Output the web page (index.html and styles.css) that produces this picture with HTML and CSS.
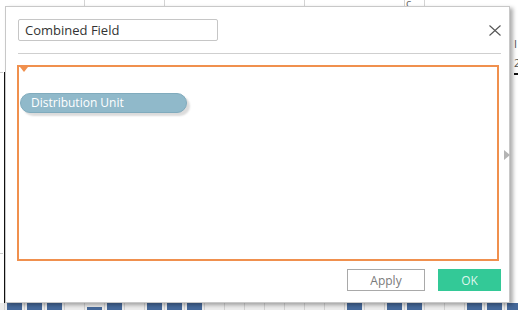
FILE: index.html
```html
<!DOCTYPE html>
<html lang="en">
<head>
    <meta charset="UTF-8">
    <meta name="viewport" content="width=device-width, initial-scale=1.0">
    <title>Combined Field</title>
    <link rel="stylesheet" href="styles.css">
</head>
<body>
    <div class="sheet">
        <div class="heads">
            <div class="head" style="width: 85px"></div>
            <div class="head" style="width: 80px"></div>
            <div class="head" style="width: 140px"></div>
            <div class="head" style="width: 100px"></div>
            <div class="head" style="width: 20px"><span class="head-text">c</span></div>
            <div class="head last"></div>
        </div>

        <div class="rows">
            <div class="gutter-left">
                <span class="tick" style="top: 66px"></span>
                <span class="tick" style="top: 247px"></span>
                <span class="axis"></span>
            </div>
            <div class="grid-body"></div>
            <div class="gutter-right">
                <span class="mark" style="top: 32px">I</span>
                <span class="mark" style="top: 51px">2</span>
                <span class="dash" style="top: 67px"></span>
            </div>
        </div>

        <div class="bars">
            <div class="bar-cell lead"></div>
            <div class="bar-cell"><span class="bar"></span></div>
            <div class="bar-cell"><span class="bar"></span></div>
            <div class="bar-cell"><span class="bar"></span></div>
            <div class="bar-cell"></div>
            <div class="bar-cell"><span class="bar short"></span></div>
            <div class="bar-cell"><span class="bar"></span></div>
            <div class="bar-cell"></div>
            <div class="bar-cell"><span class="bar"></span></div>
            <div class="bar-cell"><span class="bar"></span></div>
            <div class="bar-cell"><span class="bar"></span></div>
            <div class="bar-cell"></div>
            <div class="bar-cell"></div>
            <div class="bar-cell"></div>
            <div class="bar-cell"></div>
            <div class="bar-cell"></div>
            <div class="bar-cell"></div>
            <div class="bar-cell"></div>
            <div class="bar-cell"><span class="bar"></span></div>
            <div class="bar-cell"></div>
            <div class="bar-cell"><span class="bar"></span></div>
            <div class="bar-cell"><span class="bar"></span></div>
            <div class="bar-cell"></div>
            <div class="bar-cell"></div>
            <div class="bar-cell"><span class="bar"></span></div>
            <div class="bar-cell"><span class="bar"></span></div>
            <div class="bar-cell"><span class="bar"></span></div>
        </div>
    </div>

    <div class="dialog">
        <div class="dlg-head">
            <input type="text" class="name-field" value="Combined Field">
            <button class="close" aria-label="Close">
                <svg width="12" height="11" viewBox="0 0 12 11">
                    <path d="M0.5 0.5 L11.5 10.5 M11.5 0.5 L0.5 10.5" stroke="#555" stroke-width="1.1" fill="none"/>
                </svg>
            </button>
        </div>

        <div class="drop-zone">
            <span class="drop-marker"></span>
            <div class="pill">Distribution Unit</div>
        </div>

        <span class="scroll-arrow"></span>

        <div class="dlg-foot">
            <button class="btn apply">Apply</button>
            <button class="btn ok">OK</button>
        </div>
    </div>
</body>
</html>
```

FILE: styles.css
```css
html, body {
    margin: 0;
    padding: 0;
}
body {
    width: 518px;
    height: 310px;
    overflow: hidden;
    background-color: #fff;
    font-family: 'Open Sans', 'Noto Sans', sans-serif;
    color: #333;
    position: relative;
}

/* worksheet behind the dialog */
.sheet {
    display: flex;
    flex-direction: column;
    height: 310px;
}
.heads {
    display: flex;
    height: 6px;
    overflow: hidden;
}
.head {
    box-sizing: border-box;
    border-right: 1px solid #d4d4d4;
    position: relative;
}
.head.last {
    flex: 1;
    border-right: none;
}
.head-text {
    position: absolute;
    left: 1px;
    top: -3px;
    font-size: 11px;
    line-height: 11px;
    color: #666;
}
.rows {
    flex: 1;
    display: flex;
}
.gutter-left {
    width: 5px;
    position: relative;
}
.tick {
    position: absolute;
    left: 0;
    width: 3px;
    height: 1px;
    background-color: #ccc;
}
.axis {
    position: absolute;
    left: 4px;
    top: 66px;
    bottom: 0;
    width: 1px;
    background-color: #111;
}
.grid-body {
    flex: 1;
}
.gutter-right {
    width: 8px;
    position: relative;
}
.mark {
    position: absolute;
    left: 4px;
    font-size: 11px;
    line-height: 11px;
    color: #555;
}
.dash {
    position: absolute;
    left: 4px;
    width: 4px;
    height: 2px;
    background-color: #111;
}
.bars {
    display: flex;
    height: 7px;
    background-color: #ececec;
    overflow: hidden;
}
.bar-cell {
    flex: none;
    box-sizing: border-box;
    width: 20px;
    border-right: 1px solid #d0d0d0;
    display: flex;
    align-items: flex-end;
    justify-content: center;
}
.bar-cell.lead {
    width: 5px;
}
.bar {
    display: block;
    width: 15px;
    height: 7px;
    background-color: #46699a;
}
.bar.short {
    height: 3px;
}

/* dialog */
.dialog {
    position: absolute;
    left: 5px;
    top: 6px;
    width: 505px;
    height: 297px;
    box-sizing: border-box;
    background-color: #fff;
    border: 1px solid #c8c8c8;
    box-shadow: 3px 2px 4px rgba(0, 0, 0, 0.32);
}
.dlg-head {
    display: flex;
    align-items: center;
    justify-content: space-between;
    margin: 12px 8px 0 12px;
    padding-bottom: 12px;
    border-bottom: 1px solid #cfcfcf;
}
.name-field {
    width: 200px;
    height: 22px;
    box-sizing: border-box;
    border: 1px solid #c6c6c6;
    border-radius: 2px;
    padding: 0 6px;
    font-family: 'Open Sans', 'Noto Sans', sans-serif;
    font-size: 13px;
    color: #333;
    outline: none;
}
.close {
    width: 12px;
    height: 11px;
    padding: 0;
    border: none;
    background: none;
    display: flex;
    margin-right: 0;
}
.drop-zone {
    position: relative;
    box-sizing: border-box;
    width: 482px;
    height: 196px;
    margin: 11px 0 0 11px;
    border: 2px solid #f0904e;
    padding: 26px 0 0 1px;
}
.drop-marker {
    position: absolute;
    left: 1px;
    top: 0;
    width: 0;
    height: 0;
    border-left: 4px solid transparent;
    border-right: 4px solid transparent;
    border-top: 5px solid #f0904e;
}
.pill {
    width: 167px;
    height: 20px;
    box-sizing: border-box;
    border: 1px solid #80abbd;
    border-radius: 10px;
    background-color: #90b9ca;
    box-shadow: 3px 3px 2px rgba(0, 0, 0, 0.14);
    color: #fff;
    font-size: 12px;
    line-height: 18px;
    padding-left: 10px;
}
.scroll-arrow {
    position: absolute;
    left: 498px;
    top: 143px;
    width: 0;
    height: 0;
    border-top: 5px solid transparent;
    border-bottom: 5px solid transparent;
    border-left: 6px solid #b4b4b4;
}
.dlg-foot {
    display: flex;
    justify-content: flex-end;
    gap: 13px;
    margin: 8px 8px 0 0;
}
.btn {
    height: 22px;
    box-sizing: border-box;
    font-family: 'Open Sans', 'Noto Sans', sans-serif;
    font-size: 12px;
    padding: 0;
    cursor: pointer;
}
.btn.apply {
    width: 78px;
    background-color: #fff;
    border: 1px solid #a9a9a9;
    color: #7a7a7a;
}
.btn.ok {
    width: 63px;
    background-color: #33c997;
    border: none;
    color: #def6ec;
}
```
